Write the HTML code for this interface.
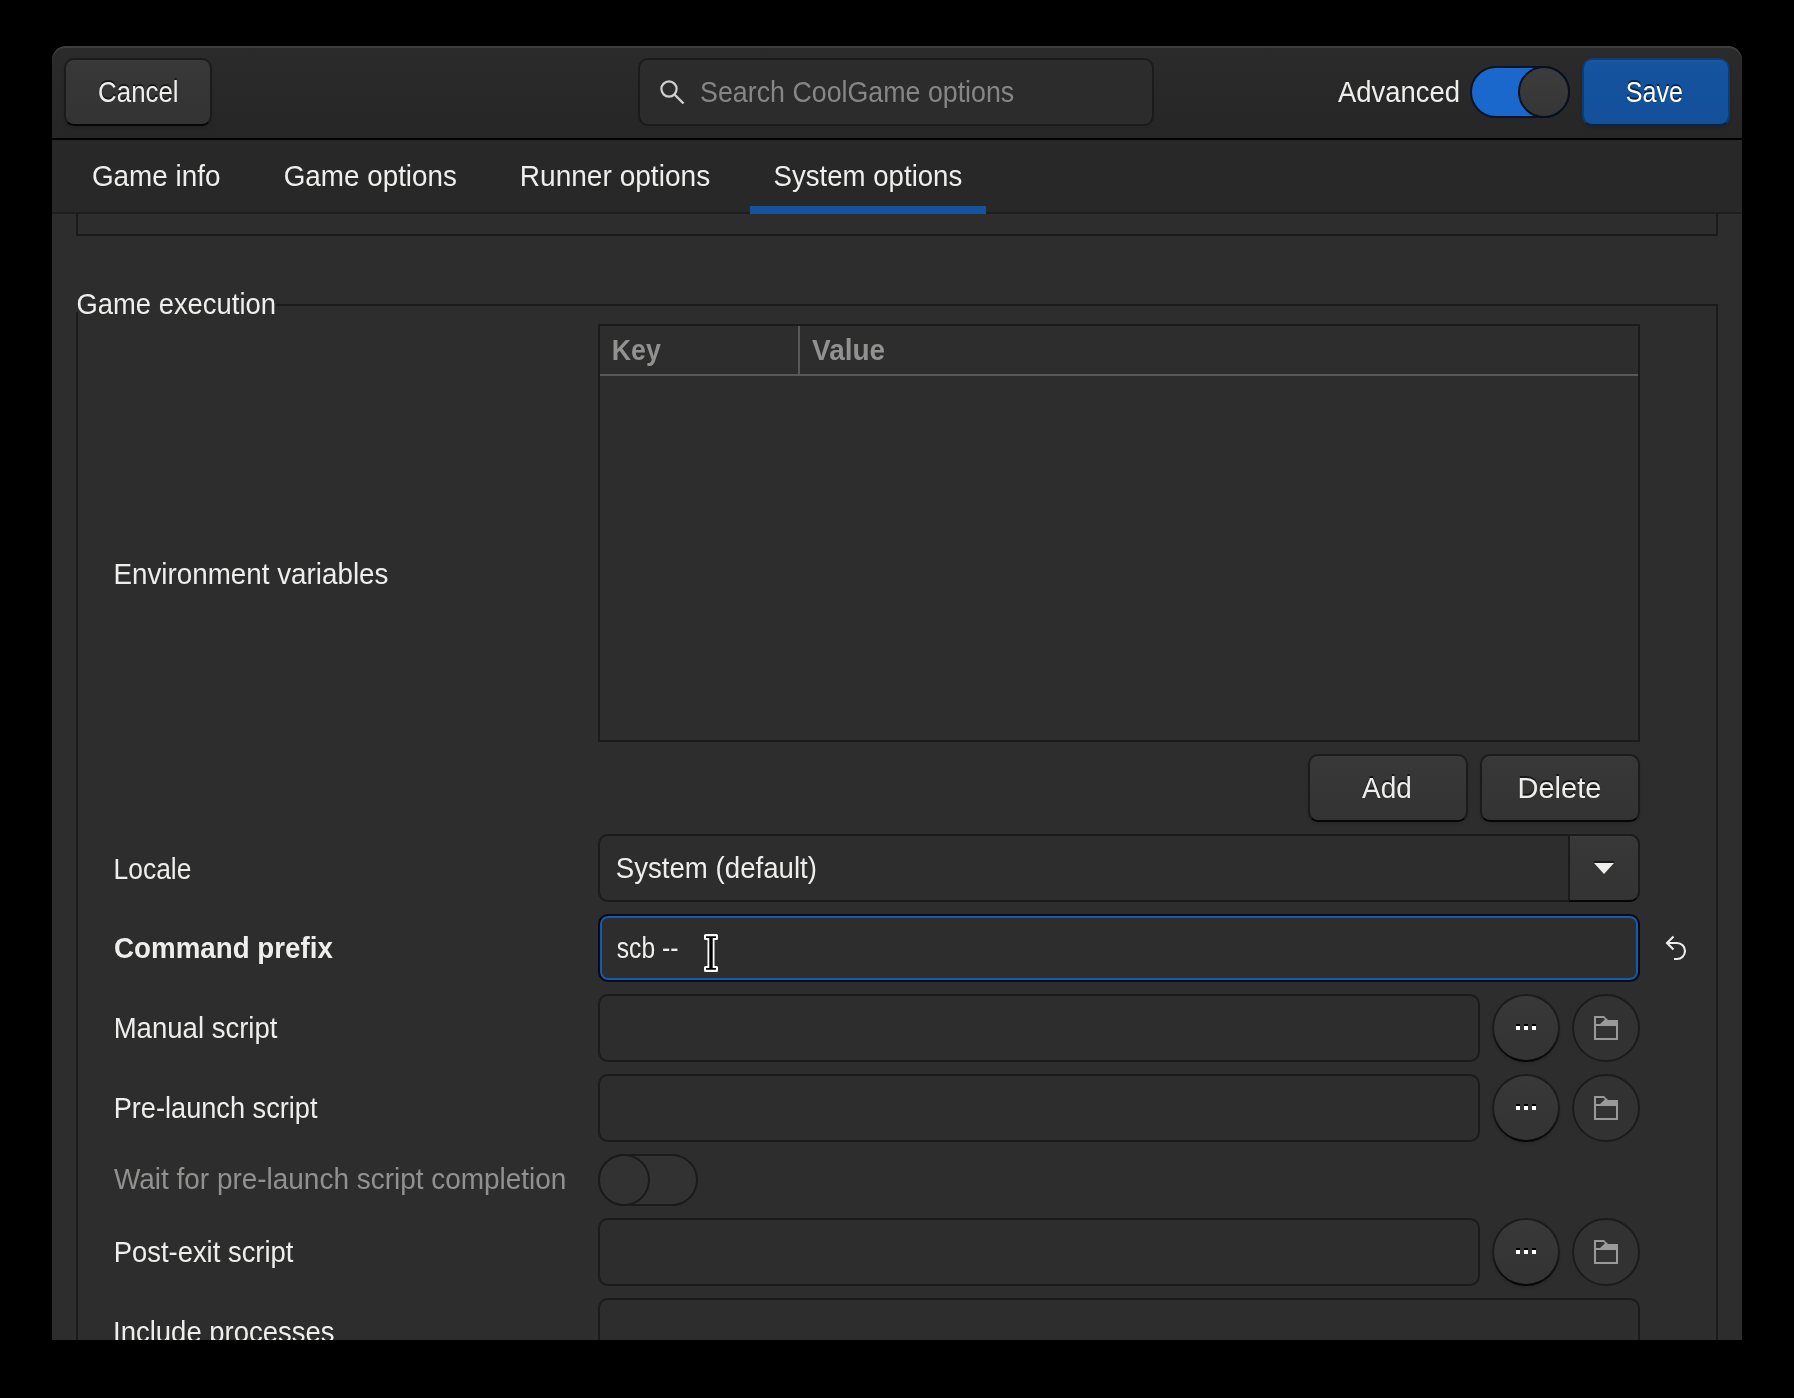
<!DOCTYPE html>
<html><head><meta charset="utf-8">
<style>
html,body{margin:0;padding:0;}
body{width:1794px;height:1398px;background:#000;position:relative;overflow:hidden;font-family:"Liberation Sans",sans-serif;}
#win{position:absolute;left:52px;top:46px;width:1690px;height:1294px;overflow:hidden;border-radius:14px 14px 0 0;background:#2d2d2d;}
#c{position:absolute;left:-52px;top:-46px;width:1794px;height:1398px;}
.a{position:absolute;box-sizing:border-box;}
.btn{position:absolute;box-sizing:border-box;border:2px solid #1b1b1b;border-bottom-color:#060606;border-radius:10px;
  background:linear-gradient(to bottom,#3b3b3b 0px,#383838 2px,#333333 100%);box-shadow:0 2px 3px rgba(0,0,0,0.12);}
.ent{position:absolute;box-sizing:border-box;border:2px solid #1b1b1b;border-radius:10px;background:#2d2d2d;}
.rnd{position:absolute;box-sizing:border-box;width:68px;height:68px;border-radius:50%;padding:2px;
  background:linear-gradient(to bottom,#1b1b1b 0%,#1b1b1b 55%,#050505 100%);box-shadow:0 2px 3px rgba(0,0,0,0.12);}
.rnd::after{content:"";display:block;width:64px;height:64px;border-radius:50%;background:linear-gradient(to bottom,#3a3a3a 0px,#383838 3px,#333333 100%);}
.rndi{position:absolute;box-sizing:border-box;width:68px;height:68px;border-radius:50%;border:2px solid #1b1b1b;background:#323232;}
</style></head><body>
<div id="win"><div id="c">
  <!-- headerbar -->
  <div class="a" style="left:52px;top:46px;width:1690px;height:92px;border-radius:14px 14px 0 0;background:linear-gradient(to bottom,#2b2b2b,#262626);box-shadow:inset 0 2px 0 rgba(255,255,255,0.09);"></div>
  <div class="a" style="left:52px;top:138px;width:1690px;height:2px;background:#000;"></div>
  <!-- buttons in headerbar -->
  <div class="btn" style="left:64px;top:58px;width:148px;height:68px;"></div>
  <div class="ent" style="left:638px;top:58px;width:516px;height:68px;background:#2c2c2c;"></div>
  <!-- switch on -->
  <div class="a" style="left:1470px;top:66px;width:100px;height:52px;border-radius:26px;background:#1b68cc;border:2px solid #06142a;"></div>
  <div class="a" style="left:1518px;top:66px;width:52px;height:52px;border-radius:50%;background:linear-gradient(to bottom,#3c3c3c,#363636);border:2px solid #06101e;"></div>
  <!-- save -->
  <div class="a" style="left:1582px;top:58px;width:148px;height:68px;border-radius:10px;border:2px solid #0f3b71;border-bottom-color:#082648;background:linear-gradient(to bottom,#1a5aa8 0px,#15539e 3px,#14509a 100%);box-shadow:0 2px 3px rgba(0,0,0,0.12);"></div>

  <!-- notebook header -->
  <div class="a" style="left:52px;top:140px;width:1690px;height:72px;background:#282828;"></div>
  <div class="a" style="left:52px;top:212px;width:1690px;height:2px;background:#1e1e1e;"></div>
  <div class="a" style="left:750px;top:206px;width:236px;height:8px;background:#15539e;"></div>

  <!-- previous frame tail -->
  <div class="a" style="left:76px;top:214px;width:1642px;height:22px;border:2px solid #1b1b1b;border-top:none;"></div>

  <!-- game execution frame -->
  <div class="a" style="left:76px;top:304px;width:1642px;height:1200px;border:2px solid #1b1b1b;"></div>
  <div class="a" style="left:74px;top:300px;width:202px;height:12px;background:#2d2d2d;"></div>

  <!-- tree view -->
  <div class="a" style="left:598px;top:324px;width:1042px;height:418px;border:2px solid #1b1b1b;background:#2d2d2d;"></div>
  <div class="a" style="left:600px;top:374px;width:1038px;height:2px;background:#585858;"></div>
  <div class="a" style="left:798px;top:326px;width:2px;height:48px;background:#585858;"></div>

  <!-- add / delete -->
  <div class="btn" style="left:1308px;top:754px;width:160px;height:68px;"></div>
  <div class="btn" style="left:1480px;top:754px;width:160px;height:68px;"></div>

  <!-- locale combo -->
  <div class="ent" style="left:598px;top:834px;width:1042px;height:68px;"></div>
  <div class="a" style="left:1568px;top:834px;width:72px;height:68px;border:2px solid #1b1b1b;border-bottom-color:#060606;border-radius:0 10px 10px 0;background:linear-gradient(to bottom,#3b3b3b 0px,#383838 2px,#333333 100%);"></div>

  <!-- command prefix (focused) -->
  <div class="a" style="left:598px;top:914px;width:1042px;height:68px;border-radius:10px;border:2px solid #030b16;box-shadow:inset 0 0 0 2px #1858ad;background:#2d2d2d;"></div>

  <!-- manual script -->
  <div class="ent" style="left:598px;top:994px;width:882px;height:68px;"></div>
  <div class="rnd" style="left:1492px;top:994px;"></div>
  <div class="rndi" style="left:1572px;top:994px;"></div>

  <!-- pre-launch -->
  <div class="ent" style="left:598px;top:1074px;width:882px;height:68px;"></div>
  <div class="rnd" style="left:1492px;top:1074px;"></div>
  <div class="rndi" style="left:1572px;top:1074px;"></div>

  <!-- wait switch (insensitive off) -->
  <div class="a" style="left:598px;top:1154px;width:100px;height:52px;border-radius:26px;background:#323232;border:2px solid #1b1b1b;"></div>
  <div class="a" style="left:598px;top:1154px;width:52px;height:52px;border-radius:50%;background:#323232;border:2px solid #1b1b1b;"></div>

  <!-- post-exit -->
  <div class="ent" style="left:598px;top:1218px;width:882px;height:68px;"></div>
  <div class="rnd" style="left:1492px;top:1218px;"></div>
  <div class="rndi" style="left:1572px;top:1218px;"></div>

  <!-- include processes -->
  <div class="ent" style="left:598px;top:1298px;width:1042px;height:68px;"></div>

  <svg class="a" style="left:0;top:0;will-change:transform;" width="1794" height="1398" viewBox="0 0 1794 1398">
    <g font-family="Liberation Sans" font-size="29">
<text x="98.11" y="100.00" textLength="80.48" lengthAdjust="spacingAndGlyphs" font-weight="400" fill="#000" fill-opacity="0.55">Cancel</text>
<text x="98.11" y="102.00" textLength="80.48" lengthAdjust="spacingAndGlyphs" font-weight="400" fill="#eeeeec">Cancel</text>
<text x="700.08" y="102.00" textLength="314.19" lengthAdjust="spacingAndGlyphs" font-weight="400" fill="#868685">Search CoolGame options</text>
<text x="1338.00" y="102.00" textLength="122.07" lengthAdjust="spacingAndGlyphs" font-weight="400" fill="#eeeeec">Advanced</text>
<text x="1625.84" y="100.00" textLength="57.14" lengthAdjust="spacingAndGlyphs" font-weight="400" fill="#000" fill-opacity="0.55">Save</text>
<text x="1625.84" y="102.00" textLength="57.14" lengthAdjust="spacingAndGlyphs" font-weight="400" fill="#ffffff">Save</text>
<text x="91.94" y="186.00" textLength="128.55" lengthAdjust="spacingAndGlyphs" font-weight="400" fill="#eeeeec">Game info</text>
<text x="283.74" y="186.00" textLength="173.14" lengthAdjust="spacingAndGlyphs" font-weight="400" fill="#eeeeec">Game options</text>
<text x="519.76" y="186.00" textLength="190.42" lengthAdjust="spacingAndGlyphs" font-weight="400" fill="#eeeeec">Runner options</text>
<text x="773.55" y="186.00" textLength="188.73" lengthAdjust="spacingAndGlyphs" font-weight="400" fill="#eeeeec">System options</text>
<text x="76.46" y="314.00" textLength="199.51" lengthAdjust="spacingAndGlyphs" font-weight="400" fill="#eeeeec">Game execution</text>
<text x="611.78" y="360.00" textLength="49.04" lengthAdjust="spacingAndGlyphs" font-weight="700" fill="#919190">Key</text>
<text x="812.10" y="360.00" textLength="73.02" lengthAdjust="spacingAndGlyphs" font-weight="700" fill="#919190">Value</text>
<text x="113.48" y="584.30" textLength="275.00" lengthAdjust="spacingAndGlyphs" font-weight="400" fill="#eeeeec">Environment variables</text>
<text x="1362.00" y="796.40" textLength="49.79" lengthAdjust="spacingAndGlyphs" font-weight="400" fill="#000" fill-opacity="0.55">Add</text>
<text x="1362.00" y="798.40" textLength="49.79" lengthAdjust="spacingAndGlyphs" font-weight="400" fill="#eeeeec">Add</text>
<text x="1517.60" y="796.40" textLength="83.72" lengthAdjust="spacingAndGlyphs" font-weight="400" fill="#000" fill-opacity="0.55">Delete</text>
<text x="1517.60" y="798.40" textLength="83.72" lengthAdjust="spacingAndGlyphs" font-weight="400" fill="#eeeeec">Delete</text>
<text x="113.58" y="878.50" textLength="77.85" lengthAdjust="spacingAndGlyphs" font-weight="400" fill="#eeeeec">Locale</text>
<text x="615.75" y="878.00" textLength="201.23" lengthAdjust="spacingAndGlyphs" font-weight="400" fill="#eeeeec">System (default)</text>
<text x="114.04" y="958.40" textLength="218.88" lengthAdjust="spacingAndGlyphs" font-weight="700" fill="#eeeeec">Command prefix</text>
<text x="616.80" y="957.70" textLength="61.56" lengthAdjust="spacingAndGlyphs" font-weight="400" fill="#eeeeec">scb --</text>
<text x="113.70" y="1038.00" textLength="163.75" lengthAdjust="spacingAndGlyphs" font-weight="400" fill="#eeeeec">Manual script</text>
<text x="113.73" y="1117.80" textLength="203.73" lengthAdjust="spacingAndGlyphs" font-weight="400" fill="#eeeeec">Pre-launch script</text>
<text x="113.90" y="1189.40" textLength="452.49" lengthAdjust="spacingAndGlyphs" font-weight="400" fill="#919190">Wait for pre-launch script completion</text>
<text x="113.71" y="1262.00" textLength="179.74" lengthAdjust="spacingAndGlyphs" font-weight="400" fill="#eeeeec">Post-exit script</text>
<text x="113.11" y="1342.40" textLength="221.37" lengthAdjust="spacingAndGlyphs" font-weight="400" fill="#eeeeec">Include processes</text>
    </g>
    <!-- search icon -->
    <circle cx="669" cy="89" r="7.6" fill="none" stroke="#cfcfce" stroke-width="2.2"/>
    <path d="M674.5,94.5 L683.5,103.5" stroke="#cfcfce" stroke-width="2.4" stroke-linecap="butt"/>
    <!-- combo arrow -->
    <path d="M1594,861 L1614,861 L1614,863 L1594,863 Z" fill="#000" fill-opacity="0.5"/>
    <path d="M1594,863 L1614,863 L1604,874 Z" fill="#eeeeec"/>
    <!-- revert icon -->
    <path d="M1673.5,936.5 L1667,943 L1673.5,949.5 M1667,943 H1677 A8,8 0 0 1 1677,959 H1674" fill="none" stroke="#eeeeec" stroke-width="2.1"/>
    <!-- I-beam cursor -->
    <g>
      <path d="M705.5,934 H716.5 Q718,934 718,935.5 V938.5 Q718,940 716.5,940 H714.5 V966 H716.5 Q718,966 718,967.5 V970.5 Q718,972 716.5,972 H705.5 Q704,972 704,970.5 V967.5 Q704,966 705.5,966 H707.5 V940 H705.5 Q704,940 704,938.5 V935.5 Q704,934 705.5,934 Z" fill="#fff"/>
      <path d="M706,936.2 H716 V938 H712.7 V968 H716 V969.8 H706 V968 H709.3 V938 H706 Z" fill="#000"/>
    </g>
    <!-- dots & folders -->
    <g id="dots">
      <rect x="1516" y="1024" width="4" height="2" fill="#000"/><rect x="1524" y="1024" width="4" height="2" fill="#000"/><rect x="1532" y="1024" width="4" height="2" fill="#000"/>
      <rect x="1516" y="1026" width="4" height="4" fill="#fff"/><rect x="1524" y="1026" width="4" height="4" fill="#fff"/><rect x="1532" y="1026" width="4" height="4" fill="#fff"/>
    </g>
    <use href="#dots" x="0" y="80"/>
    <use href="#dots" x="0" y="224"/>
    <g id="folder">
      <path fill="#9a9a99" fill-rule="evenodd" d="M1594,1016 H1604 L1608,1020 H1618 V1040 H1594 Z M1596,1026 V1038 H1616 V1026 Z M1596,1018 V1024 H1600 L1605,1019.2 L1603.5,1018 Z"/>
    </g>
    <use href="#folder" x="0" y="80"/>
    <use href="#folder" x="0" y="224"/>
  </svg>
</div></div>
</body></html>
